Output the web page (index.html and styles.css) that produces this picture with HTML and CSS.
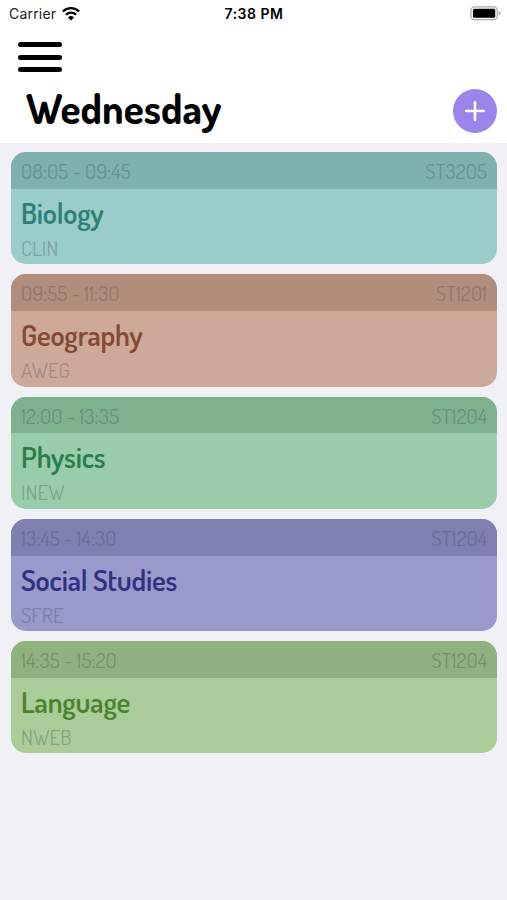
FILE: index.html
```
<!DOCTYPE html>
<html lang="en">
<head>
    <meta charset="UTF-8">
    <meta name="viewport" content="width=device-width, initial-scale=1.0">
    <title>Timetable</title>
    <link rel="stylesheet" href="styles.css">
</head>
<body>
    <header class="header">
        <div class="status-bar">
            <div class="carrier">
                <span>Carrier</span>
                <svg class="wifi" width="18" height="14" viewBox="0 0 18 14">
                    <g fill="none" stroke="#000" stroke-width="2.3">
                        <path d="M0.9 4.5a11.5 11.5 0 0 1 16.2 0"/>
                        <path d="M3.9 7.8a7.2 7.2 0 0 1 10.2 0"/>
                    </g>
                    <path d="M6 10.4a4.3 4.3 0 0 1 6 0l-3 3z"/>
                </svg>
            </div>
            <span class="clock">7:38 PM</span>
            <svg class="battery" width="31" height="15" viewBox="0 0 31 15">
                <rect x="0.9" y="0.9" width="26.4" height="12.8" rx="3.6" fill="#fff" stroke="#aaa" stroke-width="1.3"/>
                <rect x="3" y="2.7" width="22.2" height="9.1" rx="1.6"/>
                <path d="M28.7 5.2q1.9 0.7 1.9 2.1t-1.9 2.1z" fill="#aaa"/>
            </svg>
        </div>
        <button class="menu" aria-label="Menu">
            <span></span>
            <span></span>
            <span></span>
        </button>
        <div class="title-row">
            <h1 class="title">Wednesday</h1>
            <button class="add" aria-label="Add">
                <svg width="20" height="20" viewBox="0 0 20 20">
                    <path d="M10 1.2v17.6M1.2 10h17.6" stroke="#fff" stroke-width="2.6" stroke-linecap="round"/>
                </svg>
            </button>
        </div>
    </header>

    <main class="lessons">
        <section class="lesson biology">
            <div class="lesson-top">
                <span class="time">08:05 - 09:45</span>
                <span class="room">ST3205</span>
            </div>
            <h2 class="subject">Biology</h2>
            <p class="teacher">CLIN</p>
        </section>
        <section class="lesson geography">
            <div class="lesson-top">
                <span class="time">09:55 - 11:30</span>
                <span class="room">ST1201</span>
            </div>
            <h2 class="subject">Geography</h2>
            <p class="teacher">AWEG</p>
        </section>
        <section class="lesson physics">
            <div class="lesson-top">
                <span class="time">12:00 - 13:35</span>
                <span class="room">ST1204</span>
            </div>
            <h2 class="subject">Physics</h2>
            <p class="teacher">INEW</p>
        </section>
        <section class="lesson social">
            <div class="lesson-top">
                <span class="time">13:45 - 14:30</span>
                <span class="room">ST1204</span>
            </div>
            <h2 class="subject">Social Studies</h2>
            <p class="teacher">SFRE</p>
        </section>
        <section class="lesson language">
            <div class="lesson-top">
                <span class="time">14:35 - 15:20</span>
                <span class="room">ST1204</span>
            </div>
            <h2 class="subject">Language</h2>
            <p class="teacher">NWEB</p>
        </section>
    </main>
</body>
</html>
```
FILE: styles.css
```
* {
    margin: 0;
    padding: 0;
    box-sizing: border-box;
}

body {
    background: #f1f0f6;
    min-height: 100vh;
    font-family: Dosis, Lato, sans-serif;
}

button {
    border: none;
    background: none;
}

.header {
    height: 142.7px;
    background: #fff;
}

.status-bar {
    display: grid;
    grid-template-columns: 1fr auto 1fr;
    align-items: center;
    height: 27px;
    padding: 0 6px 0 9px;
    font-family: Inter, sans-serif;
    font-size: 14px;
    line-height: 27px;
    color: #222;
}

.carrier {
    display: flex;
    align-items: center;
    gap: 6px;
    letter-spacing: 0.2px;
}

.clock {
    padding-right: 2px;
    font-weight: 600;
    color: #000;
    letter-spacing: 0.5px;
}

.battery {
    justify-self: end;
}

.menu {
    display: flex;
    flex-direction: column;
    gap: 7.2px;
    width: 44px;
    margin: 15.4px 0 0 18px;
}

.menu span {
    height: 5px;
    border-radius: 3px;
    background: #000;
}

.title-row {
    display: flex;
    justify-content: space-between;
    align-items: center;
    height: 44px;
    margin-top: 17.2px;
    padding: 0 10px 0 26px;
}

.title {
    padding-bottom: 6px;
    font-size: 41.4px;
    font-weight: 700;
    line-height: 44px;
}

.add {
    display: flex;
    align-items: center;
    justify-content: center;
    width: 44px;
    height: 44px;
    border-radius: 50%;
    background: #9985eb;
}

.lessons {
    display: flex;
    flex-direction: column;
    gap: 10px;
    padding: 9.6px 10px 0 11px;
}

.lesson {
    height: 112.2px;
    border-radius: 15px;
    overflow: hidden;
}

.lesson-top {
    display: flex;
    justify-content: space-between;
    height: 36.7px;
    padding: 0 10px;
    line-height: 38px;
}

.time, .room, .teacher {
    font-size: 21px;
    font-weight: 400;
    color: rgba(60, 60, 80, 0.3);
}

.subject {
    padding-left: 10px;
    font-size: 29px;
    font-weight: 600;
    line-height: 48px;
    letter-spacing: -0.2px;
}

.teacher {
    padding-left: 10px;
    line-height: 22px;
}

.biology {
    background: #9acccb;
}

.biology .lesson-top {
    background: #7fb1b0;
}

.biology .subject {
    color: #2d7f78;
}

.geography {
    background: #cca999;
}

.geography .lesson-top {
    background: #b18d7b;
}

.geography .subject {
    color: #834936;
}

.physics {
    background: #99cda9;
}

.physics .lesson-top {
    background: #7eb28d;
}

.physics .subject {
    color: #2b7e49;
}

.social {
    background: #9999cc;
}

.social .lesson-top {
    background: #7f7fb2;
}

.social .subject {
    color: #313182;
}

.language {
    background: #aacc99;
}

.language .lesson-top {
    background: #8fb27e;
}

.language .subject {
    color: #4c8230;
}
```
